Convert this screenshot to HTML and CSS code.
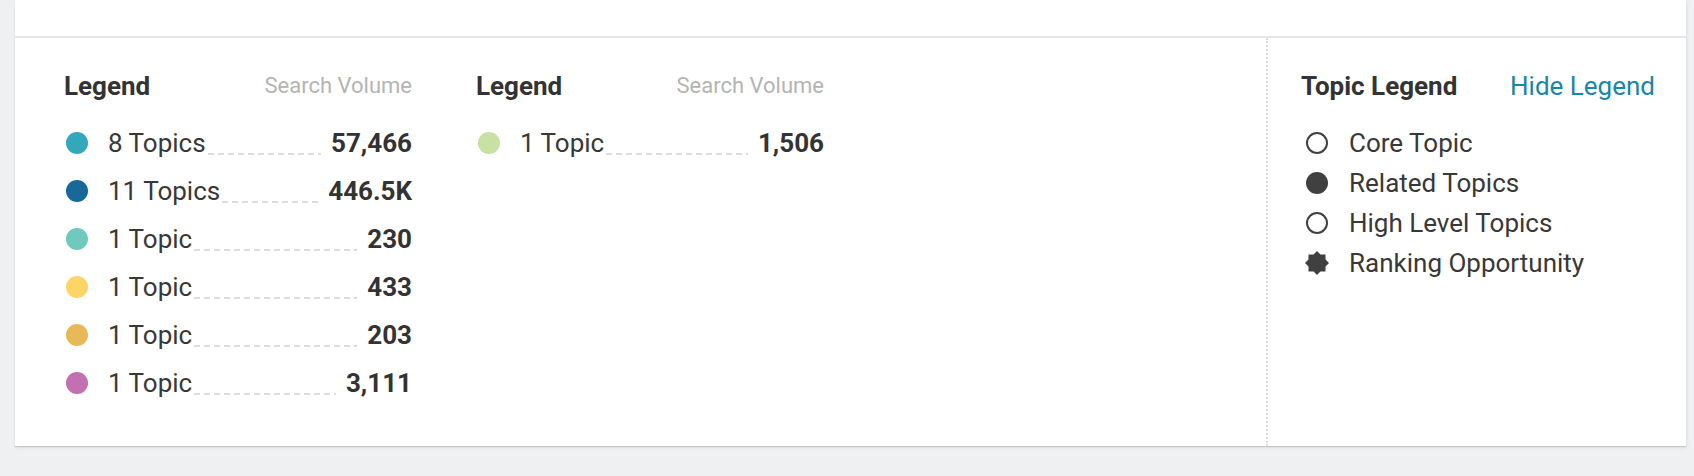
FILE: index.html
```html
<!DOCTYPE html>
<html lang="en">
<head>
    <meta charset="UTF-8">
    <meta name="viewport" content="width=device-width, initial-scale=1.0">
    <title>Topic Legend</title>
    <link rel="stylesheet" href="styles.css">
</head>
<body>
    <div class="page">
        <div class="card">
            <div class="card-top"></div>
            <div class="legend-area">
                <div class="volume-legends">
                    <div class="legend-col">
                        <div class="legend-head">
                            <span class="legend-title">Legend</span>
                            <span class="legend-sub">Search Volume</span>
                        </div>
                        <ul class="legend-list">
                            <li class="legend-row"><span class="dot dot-teal"></span><span class="label">8 Topics</span><span class="leader"></span><span class="amount">57,466</span></li>
                            <li class="legend-row"><span class="dot dot-blue"></span><span class="label">11 Topics</span><span class="leader"></span><span class="amount">446.5K</span></li>
                            <li class="legend-row"><span class="dot dot-mint"></span><span class="label">1 Topic</span><span class="leader"></span><span class="amount">230</span></li>
                            <li class="legend-row"><span class="dot dot-yellow"></span><span class="label">1 Topic</span><span class="leader"></span><span class="amount">433</span></li>
                            <li class="legend-row"><span class="dot dot-gold"></span><span class="label">1 Topic</span><span class="leader"></span><span class="amount">203</span></li>
                            <li class="legend-row"><span class="dot dot-pink"></span><span class="label">1 Topic</span><span class="leader"></span><span class="amount">3,111</span></li>
                        </ul>
                    </div>
                    <div class="legend-col">
                        <div class="legend-head">
                            <span class="legend-title">Legend</span>
                            <span class="legend-sub">Search Volume</span>
                        </div>
                        <ul class="legend-list">
                            <li class="legend-row"><span class="dot dot-green"></span><span class="label">1 Topic</span><span class="leader"></span><span class="amount">1,506</span></li>
                        </ul>
                    </div>
                </div>
                <div class="topic-legend">
                    <div class="legend-head">
                        <span class="legend-title">Topic Legend</span>
                        <a class="hide-link" href="#">Hide Legend</a>
                    </div>
                    <ul class="topic-list">
                        <li class="topic-row"><span class="marker"><span class="ring"></span></span>Core Topic</li>
                        <li class="topic-row"><span class="marker"><span class="disc"></span></span>Related Topics</li>
                        <li class="topic-row"><span class="marker"><span class="ring"></span></span>High Level Topics</li>
                        <li class="topic-row">
                            <span class="marker">
                                <svg width="24" height="24" viewBox="0 0 22 22"><polygon fill="#404040" points="11,0 14.2,3.2 18.8,3.2 18.8,7.8 22,11 18.8,14.2 18.8,18.8 14.2,18.8 11,22 7.8,18.8 3.2,18.8 3.2,14.2 0,11 3.2,7.8 3.2,3.2 7.8,3.2"/></svg>
                            </span>Ranking Opportunity
                        </li>
                    </ul>
                </div>
            </div>
        </div>
    </div>
</body>
</html>
```

FILE: styles.css
```css
*{
    padding: 0;
    margin: 0;
    box-sizing: border-box;
}
ul{
    list-style: none;
}
body{
    background-color: #eff0f2;
    font-family: Roboto, "Noto Sans", "Liberation Sans", sans-serif;
    color: #383838;
}
.page{
    padding: 0 8px 30px 15px;
}
.card{
    background-color: #fff;
    box-shadow: 0 1px 1px rgba(0, 0, 0, 0.14), 1px 2px 4px rgba(0, 0, 0, 0.06);
}
.card-top{
    height: 38px;
    border-bottom: 2px solid #e6e6e6;
}
.legend-area{
    display: flex;
}
.volume-legends{
    flex: 1;
    display: flex;
    gap: 64px;
    padding: 33px 0 48px 49px;
}
.legend-col{
    width: 348px;
}
.legend-head{
    display: flex;
    justify-content: space-between;
    align-items: flex-start;
    line-height: 30px;
    margin-bottom: 27px;
}
.legend-title{
    font-size: 26px;
    font-weight: 700;
    color: #333;
}
.legend-sub{
    font-size: 22px;
    color: #b4b4b4;
}
.legend-list{
    display: flex;
    flex-direction: column;
    gap: 18px;
}
.legend-row{
    display: flex;
    align-items: center;
    font-size: 26px;
    line-height: 30px;
}
.dot{
    flex: none;
    width: 22px;
    height: 22px;
    border-radius: 50%;
    margin: 0 20px 0 2px;
}
.dot-teal{ background-color: #33a8bb; }
.dot-blue{ background-color: #18689a; }
.dot-mint{ background-color: #6fcabd; }
.dot-yellow{ background-color: #fdd466; }
.dot-gold{ background-color: #e8b958; }
.dot-pink{ background-color: #c270b1; }
.dot-green{ background-color: #c7e0a3; }
.leader{
    flex: 1;
    align-self: stretch;
    margin: 0 10px 0 2px;
    background: repeating-linear-gradient(90deg, #dcdcdc 0 6px, transparent 6px 10px) 0 25px / 100% 2px no-repeat;
}
.amount{
    font-weight: 700;
    color: #333;
}
.topic-legend{
    width: 420px;
    border-left: 2px dotted #dedede;
    padding: 33px 31px 0 33px;
}
.hide-link{
    font-size: 26px;
    color: #1a86a8;
    text-decoration: none;
}
.topic-list{
    display: flex;
    flex-direction: column;
    gap: 10px;
}
.topic-row{
    display: flex;
    align-items: center;
    font-size: 26px;
    line-height: 30px;
}
.marker{
    flex: none;
    width: 24px;
    height: 24px;
    display: flex;
    align-items: center;
    justify-content: center;
    margin: 0 20px 0 4px;
}
.ring{
    width: 22px;
    height: 22px;
    border: 2px solid #404040;
    border-radius: 50%;
}
.disc{
    width: 22px;
    height: 22px;
    border-radius: 50%;
    background-color: #404040;
}
```
